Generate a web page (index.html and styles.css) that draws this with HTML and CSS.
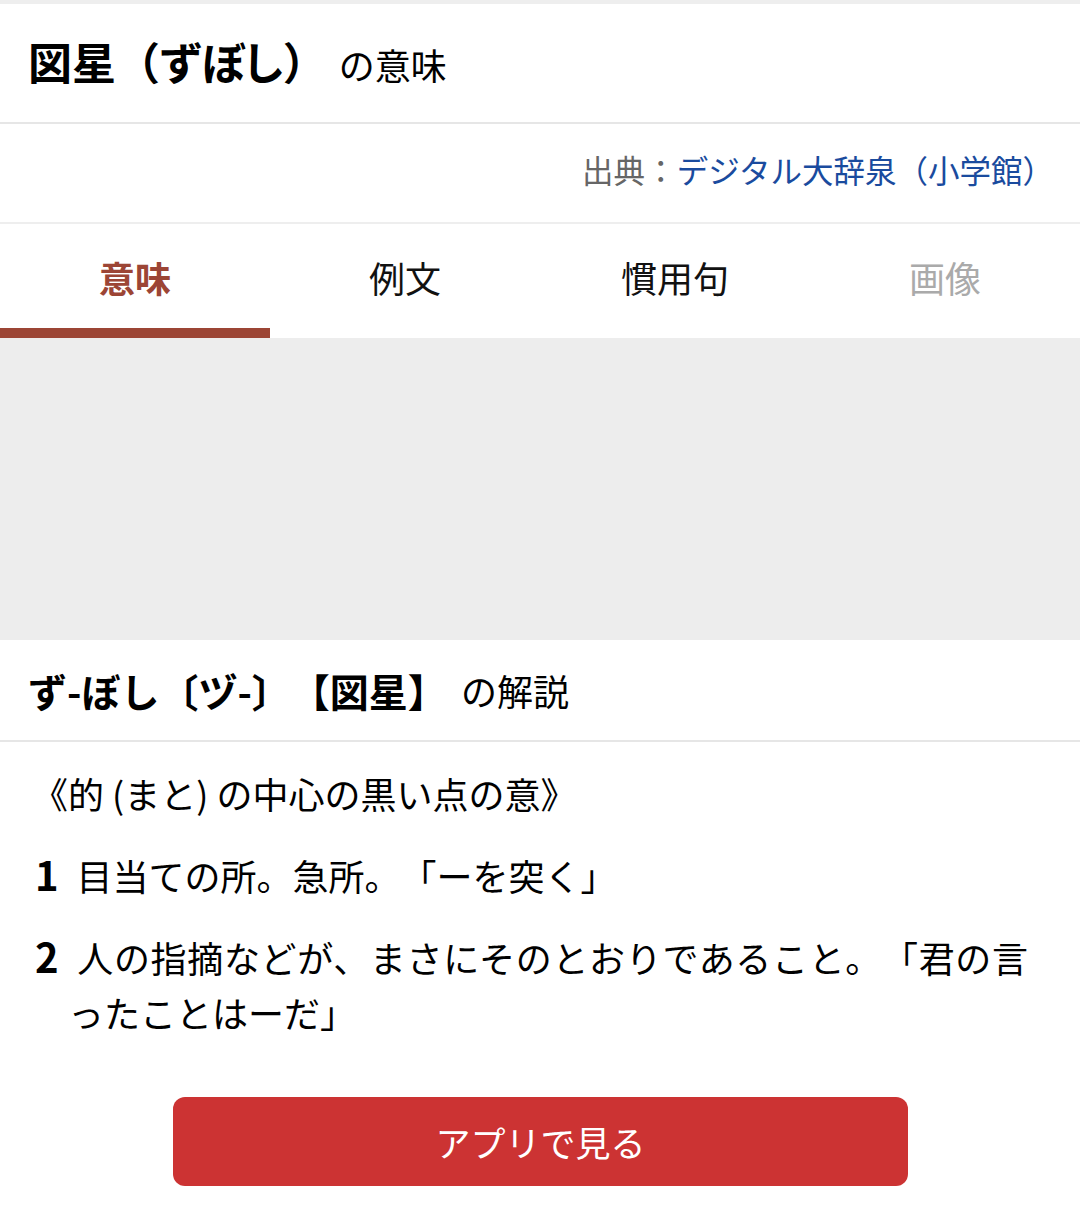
FILE: index.html
```html
<!DOCTYPE html>
<html lang="ja">
<head>
    <meta charset="UTF-8">
    <title>図星（ずぼし）の意味</title>
    <link rel="stylesheet" href="styles.css">
</head>
<body>
    <div class="page">
        <header class="title-bar">
            <h1 class="title"><span class="title-word">図星（<span class="kana">ずぼし</span>）</span><span class="title-sub">の意味</span></h1>
        </header>
        <div class="source">
            <span class="source-label">出典：</span><a class="source-link" href="#">デジタル大辞泉（小学館）</a>
        </div>
        <nav class="tabs">
            <a class="tab active" href="#">意味</a>
            <a class="tab" href="#">例文</a>
            <a class="tab" href="#">慣用句</a>
            <span class="tab disabled">画像</span>
        </nav>
        <div class="ad-space"></div>
        <section class="entry">
            <h2 class="entry-head"><span class="entry-word">ず-ぼし〔ヅ-〕【図星】</span><span class="entry-sub">の解説</span></h2>
            <div class="entry-body">
                <p class="note">《的 (まと) の中心の黒い点の意》</p>
                <p class="sense"><b class="num">1</b>目当ての所。急所。「ーを突く」</p>
                <p class="sense"><b class="num">2</b>人の指摘などが、まさにそのとおりであること。「君の言ったことはーだ」</p>
            </div>
            <div class="app-wrap">
                <a class="app-button" href="#">アプリで見る</a>
            </div>
        </section>
    </div>
</body>
</html>
```

FILE: styles.css
```css
html, body {
    margin: 0;
    padding: 0;
    background: #fff;
    font-family: "Noto Sans CJK JP", "Noto Sans", sans-serif;
    color: #000;
    text-spacing-trim: space-all;
}
a {
    text-decoration: none;
}
.page {
    border-top: 4px solid #eeeeee;
}
.title-bar {
    height: 120px;
    box-sizing: border-box;
    display: flex;
    align-items: center;
    padding: 0 28px 4px;
    border-bottom: 2px solid #e6e6e6;
}
.title {
    margin: 0;
    font-weight: normal;
    display: flex;
    align-items: baseline;
}
.title-word {
    font-size: 44px;
    font-weight: bold;
}
.kana {
    font-feature-settings: "palt";
}
.title-sub {
    font-size: 36px;
    margin-left: 12px;
}
.source {
    height: 100px;
    box-sizing: border-box;
    display: flex;
    align-items: center;
    justify-content: flex-end;
    padding: 0 26px 8px;
    font-size: 31.5px;
    border-bottom: 2px solid #eeeeee;
}
.source-label {
    color: #666;
}
.source-link {
    color: #1a4b9e;
}
.tabs {
    display: flex;
    height: 114px;
}
.tab {
    flex: 1;
    display: flex;
    align-items: center;
    justify-content: center;
    font-size: 36px;
    color: #111;
    border-bottom: 10px solid transparent;
    padding-top: 2px;
}
.tab.active {
    color: #9c4535;
    font-weight: bold;
    border-bottom-color: #9c4535;
}
.tab.disabled {
    color: #aaa;
}
.ad-space {
    height: 302px;
    background: #ededed;
}
.entry-head {
    margin: 0;
    height: 100px;
    display: flex;
    align-items: center;
    padding: 0 28px;
    border-bottom: 2px solid #e6e6e6;
    font-weight: normal;
}
.entry-word {
    font-size: 39px;
    font-weight: bold;
}
.entry-sub {
    font-size: 36px;
    margin-left: 14px;
}
.entry-body {
    padding: 24px 52px 20px 32px;
    font-size: 36px;
    line-height: 55px;
}
.entry-body p {
    margin: 0 0 26px;
}
.sense {
    padding-left: 36px;
    text-indent: -33px;
    text-align: justify;
}
.num {
    font-size: 40px;
    margin-right: 18px;
}
.app-wrap {
    display: flex;
    justify-content: center;
    padding: 11px 0 30px;
}
.app-button {
    width: 735px;
    height: 89px;
    display: flex;
    align-items: center;
    justify-content: center;
    margin-left: 1px;
    background: #cc3333;
    color: #fff;
    font-size: 35px;
    border-radius: 12px;
}
```
